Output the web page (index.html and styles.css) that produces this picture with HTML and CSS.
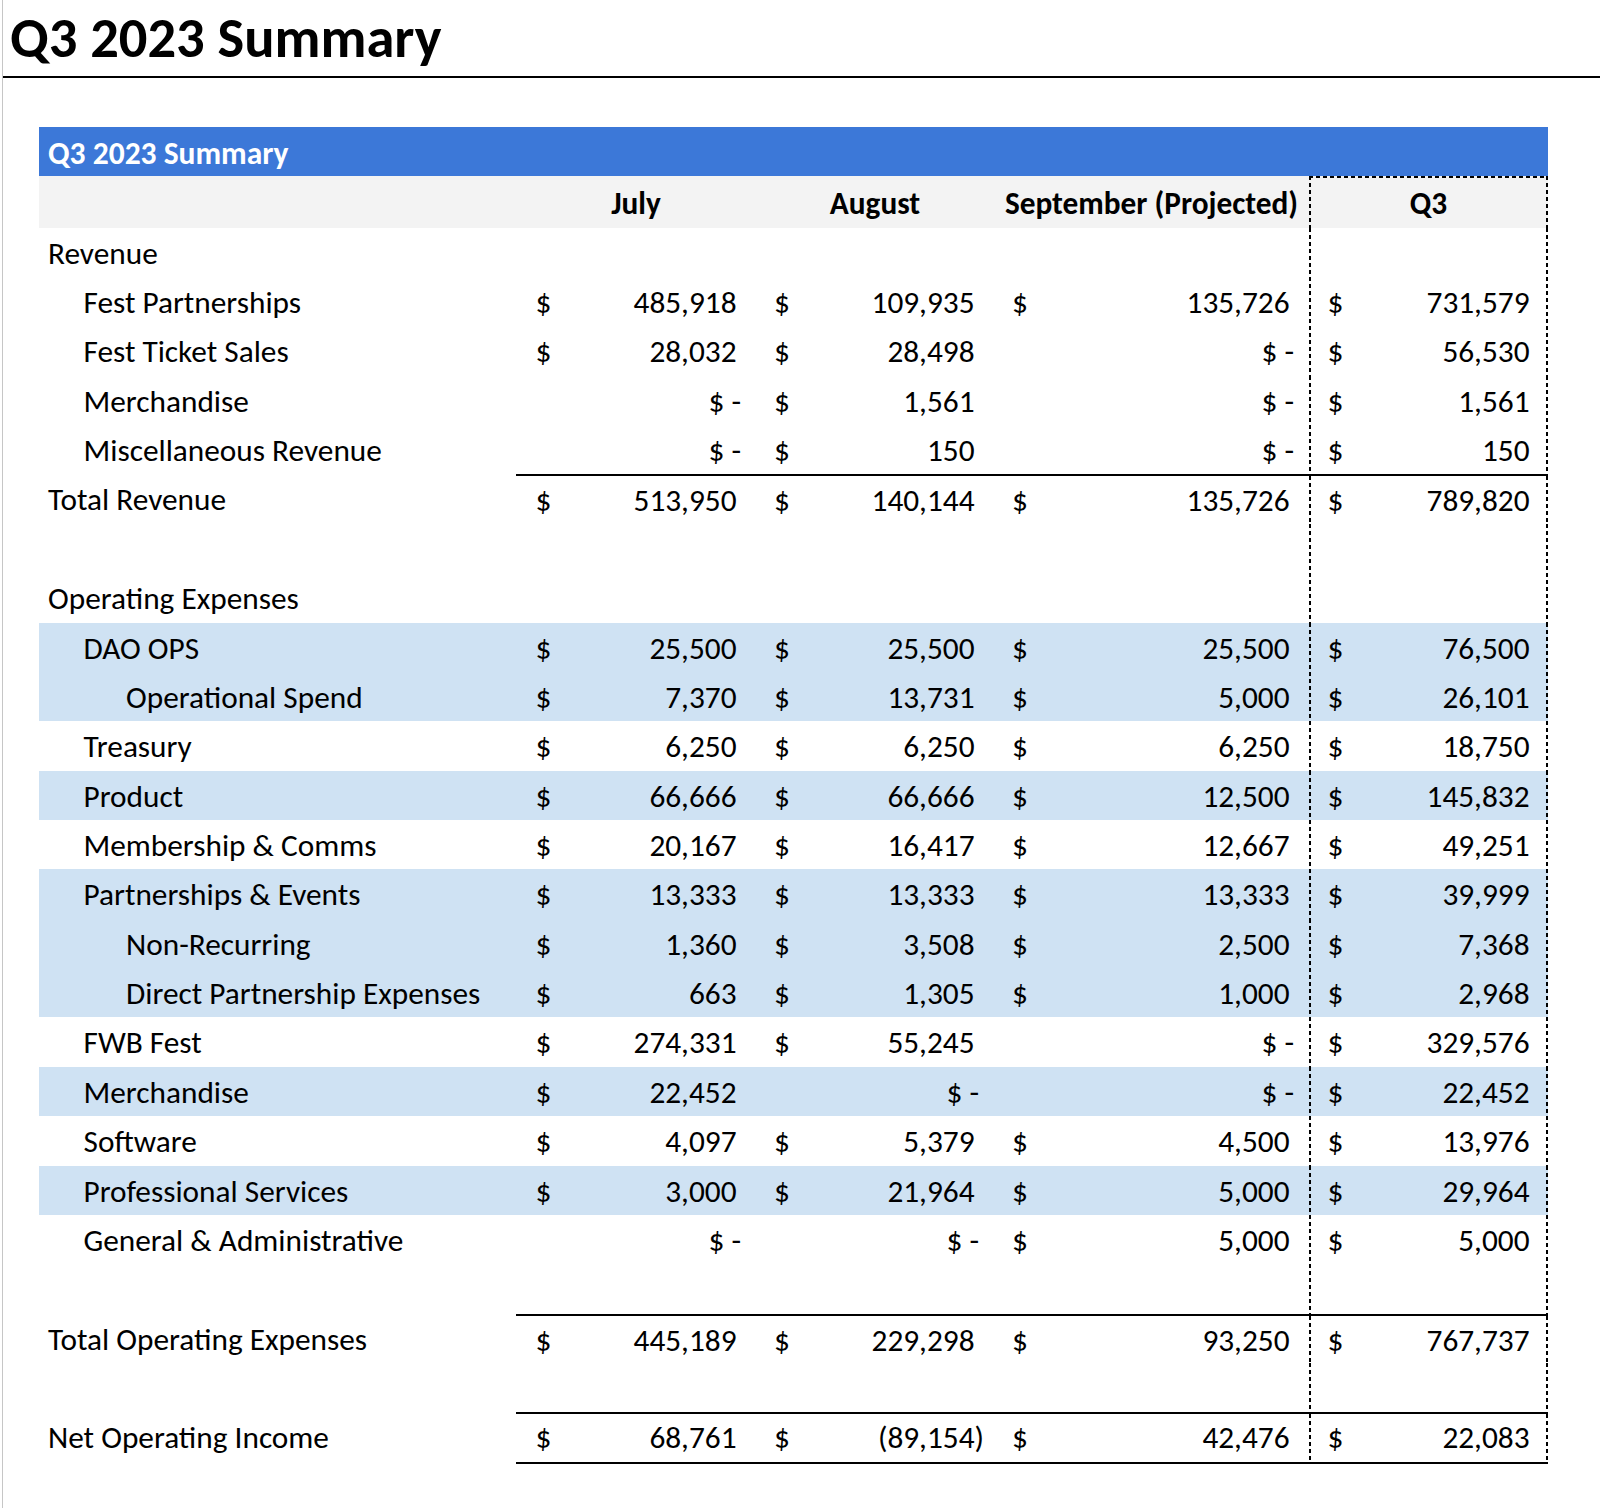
FILE: index.html
```html
<!DOCTYPE html>
<html lang="en">
<head>
<meta charset="utf-8">
<title>Q3 2023 Summary</title>
<link rel="stylesheet" href="styles.css">
</head>
<body>
<div class="page">
  <h1 class="title">Q3 2023 Summary</h1>
  <div class="sheet">
    <div class="banner">Q3 2023 Summary</div>
    <div class="row head">
      <div class="lbl"></div>
      <div class="hc">July</div>
      <div class="hc">August</div>
      <div class="hc">September (Projected)</div>
      <div class="hc q3 q3top">Q3</div>
    </div>

    <div class="row"><div class="lbl l0">Revenue</div><div></div><div></div><div></div><div class="q3"></div></div>
    <div class="row"><div class="lbl l1">Fest Partnerships</div>
      <div class="c"><span>$</span><span class="n">485,918</span></div>
      <div class="c"><span>$</span><span class="n">109,935</span></div>
      <div class="c"><span>$</span><span class="n">135,726</span></div>
      <div class="c q3"><span>$</span><span class="n">731,579</span></div></div>
    <div class="row"><div class="lbl l1">Fest Ticket Sales</div>
      <div class="c"><span>$</span><span class="n">28,032</span></div>
      <div class="c"><span>$</span><span class="n">28,498</span></div>
      <div class="c z">$ -</div>
      <div class="c q3"><span>$</span><span class="n">56,530</span></div></div>
    <div class="row"><div class="lbl l1">Merchandise</div>
      <div class="c z">$ -</div>
      <div class="c"><span>$</span><span class="n">1,561</span></div>
      <div class="c z">$ -</div>
      <div class="c q3"><span>$</span><span class="n">1,561</span></div></div>
    <div class="row"><div class="lbl l1">Miscellaneous Revenue</div>
      <div class="c z">$ -</div>
      <div class="c"><span>$</span><span class="n">150</span></div>
      <div class="c z">$ -</div>
      <div class="c q3"><span>$</span><span class="n">150</span></div></div>
    <div class="row total"><div class="lbl l0">Total Revenue</div>
      <div class="c"><span>$</span><span class="n">513,950</span></div>
      <div class="c"><span>$</span><span class="n">140,144</span></div>
      <div class="c"><span>$</span><span class="n">135,726</span></div>
      <div class="c q3"><span>$</span><span class="n">789,820</span></div></div>
    <div class="row"><div class="lbl"></div><div></div><div></div><div></div><div class="q3"></div></div>

    <div class="row"><div class="lbl l0">Operating Expenses</div><div></div><div></div><div></div><div class="q3"></div></div>
    <div class="row hl"><div class="lbl l1">DAO OPS</div>
      <div class="c"><span>$</span><span class="n">25,500</span></div>
      <div class="c"><span>$</span><span class="n">25,500</span></div>
      <div class="c"><span>$</span><span class="n">25,500</span></div>
      <div class="c q3"><span>$</span><span class="n">76,500</span></div></div>
    <div class="row hl"><div class="lbl l2">Operational Spend</div>
      <div class="c"><span>$</span><span class="n">7,370</span></div>
      <div class="c"><span>$</span><span class="n">13,731</span></div>
      <div class="c"><span>$</span><span class="n">5,000</span></div>
      <div class="c q3"><span>$</span><span class="n">26,101</span></div></div>
    <div class="row"><div class="lbl l1">Treasury</div>
      <div class="c"><span>$</span><span class="n">6,250</span></div>
      <div class="c"><span>$</span><span class="n">6,250</span></div>
      <div class="c"><span>$</span><span class="n">6,250</span></div>
      <div class="c q3"><span>$</span><span class="n">18,750</span></div></div>
    <div class="row hl"><div class="lbl l1">Product</div>
      <div class="c"><span>$</span><span class="n">66,666</span></div>
      <div class="c"><span>$</span><span class="n">66,666</span></div>
      <div class="c"><span>$</span><span class="n">12,500</span></div>
      <div class="c q3"><span>$</span><span class="n">145,832</span></div></div>
    <div class="row"><div class="lbl l1">Membership &amp; Comms</div>
      <div class="c"><span>$</span><span class="n">20,167</span></div>
      <div class="c"><span>$</span><span class="n">16,417</span></div>
      <div class="c"><span>$</span><span class="n">12,667</span></div>
      <div class="c q3"><span>$</span><span class="n">49,251</span></div></div>
    <div class="row hl"><div class="lbl l1">Partnerships &amp; Events</div>
      <div class="c"><span>$</span><span class="n">13,333</span></div>
      <div class="c"><span>$</span><span class="n">13,333</span></div>
      <div class="c"><span>$</span><span class="n">13,333</span></div>
      <div class="c q3"><span>$</span><span class="n">39,999</span></div></div>
    <div class="row hl"><div class="lbl l2">Non-Recurring</div>
      <div class="c"><span>$</span><span class="n">1,360</span></div>
      <div class="c"><span>$</span><span class="n">3,508</span></div>
      <div class="c"><span>$</span><span class="n">2,500</span></div>
      <div class="c q3"><span>$</span><span class="n">7,368</span></div></div>
    <div class="row hl"><div class="lbl l2">Direct Partnership Expenses</div>
      <div class="c"><span>$</span><span class="n">663</span></div>
      <div class="c"><span>$</span><span class="n">1,305</span></div>
      <div class="c"><span>$</span><span class="n">1,000</span></div>
      <div class="c q3"><span>$</span><span class="n">2,968</span></div></div>
    <div class="row"><div class="lbl l1">FWB Fest</div>
      <div class="c"><span>$</span><span class="n">274,331</span></div>
      <div class="c"><span>$</span><span class="n">55,245</span></div>
      <div class="c z">$ -</div>
      <div class="c q3"><span>$</span><span class="n">329,576</span></div></div>
    <div class="row hl"><div class="lbl l1">Merchandise</div>
      <div class="c"><span>$</span><span class="n">22,452</span></div>
      <div class="c z">$ -</div>
      <div class="c z">$ -</div>
      <div class="c q3"><span>$</span><span class="n">22,452</span></div></div>
    <div class="row"><div class="lbl l1">Software</div>
      <div class="c"><span>$</span><span class="n">4,097</span></div>
      <div class="c"><span>$</span><span class="n">5,379</span></div>
      <div class="c"><span>$</span><span class="n">4,500</span></div>
      <div class="c q3"><span>$</span><span class="n">13,976</span></div></div>
    <div class="row hl"><div class="lbl l1">Professional Services</div>
      <div class="c"><span>$</span><span class="n">3,000</span></div>
      <div class="c"><span>$</span><span class="n">21,964</span></div>
      <div class="c"><span>$</span><span class="n">5,000</span></div>
      <div class="c q3"><span>$</span><span class="n">29,964</span></div></div>
    <div class="row"><div class="lbl l1">General &amp; Administrative</div>
      <div class="c z">$ -</div>
      <div class="c z">$ -</div>
      <div class="c"><span>$</span><span class="n">5,000</span></div>
      <div class="c q3"><span>$</span><span class="n">5,000</span></div></div>
    <div class="row"><div class="lbl"></div><div></div><div></div><div></div><div class="q3"></div></div>

    <div class="row total"><div class="lbl l0">Total Operating Expenses</div>
      <div class="c"><span>$</span><span class="n">445,189</span></div>
      <div class="c"><span>$</span><span class="n">229,298</span></div>
      <div class="c"><span>$</span><span class="n">93,250</span></div>
      <div class="c q3"><span>$</span><span class="n">767,737</span></div></div>
    <div class="row"><div class="lbl"></div><div></div><div></div><div></div><div class="q3"></div></div>

    <div class="row total last"><div class="lbl l0">Net Operating Income</div>
      <div class="c"><span>$</span><span class="n">68,761</span></div>
      <div class="c"><span>$</span><span class="n neg">(89,154)</span></div>
      <div class="c"><span>$</span><span class="n">42,476</span></div>
      <div class="c q3"><span>$</span><span class="n">22,083</span></div></div>
  </div>
</div>
</body>
</html>
```

FILE: styles.css
```css
html, body {
  margin: 0;
  padding: 0;
  background: #ffffff;
}

body {
  font-family: Carlito, Calibri, "Open Sans", "Liberation Sans", sans-serif;
  color: #000000;
}

.page {
  margin-left: 2px;
  border-left: 1px solid #c6c6c6;
  min-height: 1508px;
  box-sizing: border-box;
}

.title {
  margin: 0;
  padding: 10px 0 10px 7px;
  font-size: 56.5px;
  line-height: 56px;
  font-weight: 700;
  border-bottom: 2px solid #000000;
}

.sheet {
  margin: 48.5px 0 0 36px;
  width: 1509px;
  font-size: 31.3px;
}

.banner {
  height: 49.5px;
  line-height: 52.5px;
  background: #3c78d8;
  color: #ffffff;
  font-weight: 700;
  padding-left: 9px;
  font-size: 31.5px;
  box-sizing: border-box;
}

.row {
  display: grid;
  grid-template-columns: 477px 240px 238px 315px 239px;
  height: 49.37px;
  line-height: 50.2px;
}

.row > div {
  box-sizing: border-box;
  white-space: nowrap;
}

.head {
  height: 51.7px;
  line-height: 55px;
  background: #f3f3f3;
}

.hc {
  text-align: center;
  font-weight: 700;
}

.hl {
  background: #cfe2f3;
}

.lbl.l0 { padding-left: 9px; }
.lbl.l1 { padding-left: 44.5px; }
.lbl.l2 { padding-left: 87px; }

.c {
  display: flex;
  justify-content: space-between;
  padding-left: 18px;
  padding-right: 10px;
}

.row > .c:nth-child(2) {
  padding-left: 19.5px;
}

.c .n {
  padding-right: 9.5px;
}

.c .n.neg {
  padding-right: 0;
}

.c.z {
  justify-content: flex-end;
  padding-right: 15px;
}

.q3 {
  background-image:
    repeating-linear-gradient(to bottom, #000 0 4px, transparent 4px 7px),
    repeating-linear-gradient(to bottom, #000 0 4px, transparent 4px 7px);
  background-size: 2px 100%, 2px 100%;
  background-position: left top, right top;
  background-repeat: no-repeat;
}

.c.q3 {
  padding-left: 18.5px;
  padding-right: 9px;
}

.c.z.q3 {
  padding-right: 14px;
}

.q3top {
  background-image:
    repeating-linear-gradient(to right, #000 0 4px, transparent 4px 7px),
    repeating-linear-gradient(to bottom, #000 0 4px, transparent 4px 7px),
    repeating-linear-gradient(to bottom, #000 0 4px, transparent 4px 7px);
  background-size: 100% 2px, 2px 100%, 2px 100%;
  background-position: left top, left top, right top;
  background-repeat: no-repeat;
}

.total > .c {
  border-top: 2px solid #000000;
  line-height: 49.2px;
}

.last > .c {
  border-bottom: 2px solid #000000;
  line-height: 47.2px;
}
```
